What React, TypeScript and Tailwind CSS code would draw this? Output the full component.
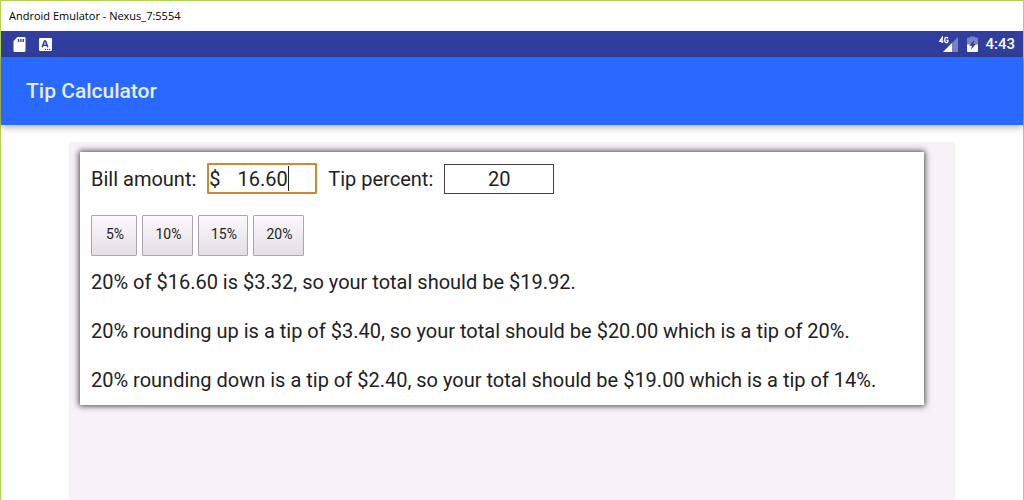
import { useState } from "react";

const PRESETS = [
  { percent: 5, width: "w-[46px]" },
  { percent: 10, width: "w-[51px]" },
  { percent: 15, width: "w-[50px]" },
  { percent: 20, width: "w-[51px]" },
];

const money = (n: number) => `$${n.toFixed(2)}`;

function StatusBar() {
  return (
    <div className="flex h-[26px] items-center justify-between bg-[#303f9f] pr-2 pl-3 text-white">
      <div className="flex items-center gap-[13px]">
        <svg className="h-[15px] w-[13px]" viewBox="0 0 13 15" aria-hidden="true">
          <path
            fill="#fff"
            fillRule="evenodd"
            d="M4.5 0H11.5Q12.5 0 12.5 1V14Q12.5 15 11.5 15H1.5Q.5 15 .5 14V4ZM4.8 2V5H6.2V2ZM7.2 2V5H8.6V2ZM9.6 2V5H11V2Z"
          />
        </svg>
        <svg className="h-[13px] w-[13px]" viewBox="0 0 13 13" aria-hidden="true">
          <rect width="13" height="13" rx="1" fill="#fff" />
          <path d="M3.2 9.2 5.5 3H6.5L8.8 9.2M4.2 7.2H7.8" fill="none" stroke="#303f9f" strokeWidth="1.5" />
          <path d="M6 11.4H7.2M8 11.4H9.2M10 11.4H11.2" stroke="#303f9f" strokeWidth="1" />
        </svg>
      </div>
      <div className="flex items-center gap-[7px]">
        <div className="flex items-center gap-[9px]">
          <svg className="h-4 w-[19px]" viewBox="0 0 19 16" aria-hidden="true">
            <path d="M19 1V16H4Z" fill="#fff" fillOpacity=".35" />
            <path d="M13 7V16H4Z" fill="#fff" />
            <path
              d="M3.2 7V1.4L.7 5.3H4.4M9 2.4Q8.4 1.4 7.3 1.4 5.7 1.4 5.7 4.1 5.7 6.6 7.3 6.6 9 6.6 9 4.4H7.5"
              fill="none"
              stroke="#fff"
              strokeWidth="1.3"
            />
          </svg>
          <svg className="h-4 w-[11px]" viewBox="0 0 11 16" aria-hidden="true">
            <path
              d="M3 1.5V.5H8V1.5H10Q11 1.5 11 2.5V15Q11 16 10 16H1Q0 16 0 15V2.5Q0 1.5 1 1.5Z"
              fill="#fff"
              fillOpacity=".35"
            />
            <path d="M0 8.5H11V15Q11 16 10 16H1Q0 16 0 15Z" fill="#fff" />
            <path d="M7.4 4 2.2 9.8H4.9L3.9 13.8 8.8 8H6.2Z" fill="#303f9f" />
          </svg>
        </div>
        <span className="text-[15px] font-medium">4:43</span>
      </div>
    </div>
  );
}

export default function App() {
  const [bill, setBill] = useState("16.60");
  const [tip, setTip] = useState("20");

  const amount = Number(bill) || 0;
  const percent = Number(tip) || 0;
  const tipAmount = (amount * percent) / 100;
  const total = amount + tipAmount;
  const up = Math.ceil(total);
  const down = Math.floor(total);
  const share = (t: number) => (amount ? Math.round(((t - amount) / amount) * 100) : 0);

  return (
    <div className="flex min-h-screen flex-col border-x border-t border-[#b1d34f] bg-white font-['Roboto',sans-serif] text-[#222]">
      <div className="flex h-[30px] items-center px-2 font-['Open_Sans',sans-serif] text-[11px] text-black">
        Android Emulator - Nexus_7:5554
      </div>
      <StatusBar />
      <header className="flex h-[68px] items-center bg-[#2969ff] px-[25px] pt-0.5 shadow-[0_1px_8px_rgba(60,40,60,0.5)]">
        <h1 className="text-[21px] font-medium text-[#e6edff]">Tip Calculator</h1>
      </header>
      <main className="mx-[68px] mt-[17px] flex-1 bg-[#f6f2f7] pt-[10px] pr-[31px] pl-[11px]">
        <section className="bg-white px-[11px] pt-[11px] pb-[11px] shadow-[0_0_6px_1px_#444]">
          <div className="flex h-[31px] items-center text-xl">
            <label htmlFor="bill" className="mr-[11px]">
              Bill amount:
            </label>
            <div className="mr-[11px] flex h-[31px] w-[110px] items-center rounded-[1px] border-2 border-[#c78a35]">
              <span className="mr-[17px]">$</span>
              <input
                id="bill"
                value={bill}
                onChange={(e) => setBill(e.target.value)}
                className="field-sizing-content bg-transparent outline-none"
              />
              <span className="h-[25px] w-px bg-[#222]" />
            </div>
            <label htmlFor="tip" className="mr-[11px]">
              Tip percent:
            </label>
            <input
              id="tip"
              value={tip}
              onChange={(e) => setTip(e.target.value)}
              className="h-[30px] w-[110px] border border-[#444] text-center outline-none"
            />
          </div>
          <div className="mt-[21px] flex gap-[5px]">
            {PRESETS.map((p) => (
              <button
                key={p.percent}
                type="button"
                onClick={() => setTip(String(p.percent))}
                className={`${p.width} h-[41px] rounded-[1px] border border-[#aaa6ab] bg-linear-to-b from-[#fcf8fd] to-[#e4dfe5] pb-1 pl-0.5 text-sm`}
              >
                {p.percent}%
              </button>
            ))}
          </div>
          <div className="mt-3 flex flex-col gap-[21px] text-xl">
            <p>
              {percent}% of {money(amount)} is {money(tipAmount)}, so your total should be {money(total)}.
            </p>
            <p>
              {percent}% rounding up is a tip of {money(up - amount)}, so your total should be {money(up)} which is a
              tip of {share(up)}%.
            </p>
            <p>
              {percent}% rounding down is a tip of {money(down - amount)}, so your total should be {money(down)} which
              is a tip of {share(down)}%.
            </p>
          </div>
        </section>
      </main>
    </div>
  );
}
